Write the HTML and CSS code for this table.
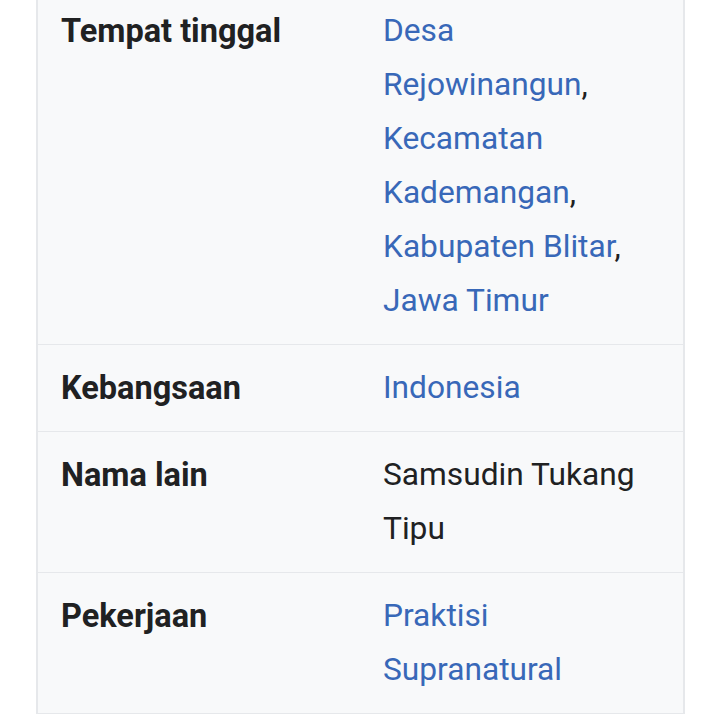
FILE: index.html
```html
<!DOCTYPE html>
<html lang="id">
<head>
<meta charset="utf-8">
<title>Infobox</title>
<link rel="stylesheet" href="styles.css">
</head>
<body>
<div class="infobox">
  <div class="row">
    <div class="label">Tempat tinggal</div>
    <div class="value"><a href="#">Desa Rejowinangun</a>, <a href="#">Kecamatan Kademangan</a>, <a href="#">Kabupaten Blitar</a>, <a href="#">Jawa Timur</a></div>
  </div>
  <div class="row">
    <div class="label">Kebangsaan</div>
    <div class="value"><a href="#">Indonesia</a></div>
  </div>
  <div class="row">
    <div class="label">Nama lain</div>
    <div class="value">Samsudin Tukang Tipu</div>
  </div>
  <div class="row">
    <div class="label">Pekerjaan</div>
    <div class="value"><a href="#">Praktisi Supranatural</a></div>
  </div>
</div>
</body>
</html>
```
FILE: styles.css
```css
html, body {
  margin: 0;
  padding: 0;
  background: #ffffff;
}
body {
  font-family: Roboto, "Noto Sans", sans-serif;
  font-size: 31.7px;
  line-height: 54px;
  color: #202122;
  overflow: hidden;
}
.infobox {
  margin: -12px 0 0 36px;
  width: 645px;
  background: #f8f9fa;
  border: 1px solid #e6e8eb;
  border-width: 0 2px 2px 2px;
}
.row {
  display: grid;
  grid-template-columns: 345px 1fr;
  padding: 16px 0;
  border-top: 1px solid #e6e8eb;
}
.row:first-child {
  border-top: 0;
}
.label {
  padding-left: 23px;
  font-size: 32.5px;
  font-weight: 700;
  color: #202122;
}
.value {
  padding-right: 25px;
}
.value a {
  color: #3868b8;
  text-decoration: none;
}
```
